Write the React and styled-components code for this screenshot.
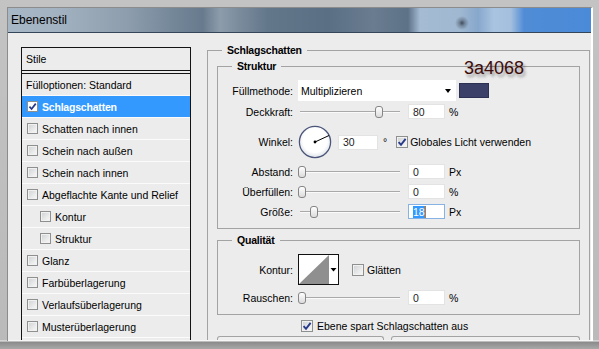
import React from 'react';
import styled, { createGlobalStyle } from 'styled-components';

const Global = createGlobalStyle`
  html, body { margin: 0; padding: 0; }
  body {
    width: 599px;
    height: 349px;
    overflow: hidden;
    background: linear-gradient(to bottom, #c3c3c3 0px, #bababa 340px, #f0f0f0 341px, #8a8a8a 342px, #a9a9a9 349px);
    font-family: "Liberation Sans", Arial, sans-serif;
    font-size: 10.5px;
    color: #000;
  }
`;

const Frame = styled.div`
  padding: 7px 0 0 7px;
`;

const Window = styled.div`
  width: 586px;
  height: 334px;
  box-sizing: border-box;
  border-top: 1px solid #8c8c8c;
  border-left: 1px solid #8c8c8c;
  border-right: 2px solid #ffffff;
  display: flex;
  flex-direction: column;
  background: #ececec;
`;

const TitleBar = styled.div`
  height: 25px;
  flex: none;
  box-sizing: border-box;
  border-bottom: 1px solid #34465a;
  display: flex;
  align-items: center;
  padding-left: 3px;
  font-size: 12px;
  color: #000;
  background:
    radial-gradient(circle at 454px 15px, rgba(40, 50, 62, 0.8) 0px, rgba(40, 50, 62, 0.35) 3px, rgba(40, 50, 62, 0) 7px),
    linear-gradient(to right,
      #a8b7c5 0px, #a3b2c0 50px, #8d9dad 120px, #748799 165px, #687b8e 195px,
      #8c9cab 212px, #7a8b9c 232px, #63778b 260px, #5b6f84 320px, #697c90 365px,
      #5e7287 400px, #a4bbd3 412px, #a0b8d1 452px, #87a7cc 470px, #a9c4e1 486px,
      #a3bfdd 503px, #508cd6 516px, #4a8ad8 586px);
`;

const Content = styled.div`
  flex: 1;
  display: flex;
  align-items: flex-start;
  padding: 14px 1px 0 13px;
  overflow: hidden;
  border-bottom: 1px solid #f7f7f7;
`;

const ListBox = styled.div`
  width: 170px;
  flex: none;
  align-self: stretch;
  box-sizing: border-box;
  border: 1px solid #141414;
  border-bottom: none;
`;

const ListHeader = styled.div`
  height: 22px;
  display: flex;
  align-items: center;
  padding-left: 4px;
  border-bottom: 1px solid #141414;
`;

const ListRows = styled.div`
  margin-top: 2px;
  border-top: 1px solid #141414;
`;

const ListRow = styled.div`
  height: 21px;
  display: flex;
  align-items: center;
  gap: 4px;
  padding-left: ${p => p.$indent}px;
  border-bottom: 1px solid #fbfbfb;
  background: ${p => (p.$selected ? '#3399ff' : 'transparent')};
  color: ${p => (p.$selected ? '#ffffff' : '#000000')};
  font-weight: ${p => (p.$selected ? 'bold' : 'normal')};
  letter-spacing: ${p => (p.$selected ? '-0.2px' : '0')};
  white-space: nowrap;
`;

const Box = styled.span`
  width: ${p => p.$size}px;
  height: ${p => p.$size}px;
  flex: none;
  box-sizing: border-box;
  border: 1px solid #8e8f8f;
  background: ${p => (p.$white ? '#ffffff' : 'linear-gradient(135deg, #cdd0d3 0%, #eeeeee 70%, #f8f8f8 100%)')};
  box-shadow: inset 0 0 0 1px ${p => (p.$white ? '#ffffff' : '#f1f1f1')};
  display: flex;
  align-items: center;
  justify-content: center;
`;

const Check = ({ checked, size = 11, white }) => (
  <Box $size={size} $white={white}>
    {checked && (
      <svg width={size - 2} height={size - 2} viewBox="0 0 10 10">
        <path d="M1.6 5.1 L4 7.8 L8.6 1.8" fill="none" stroke="#27398a" strokeWidth="1.9" />
      </svg>
    )}
  </Box>
);

const RightCol = styled.div`
  width: 383px;
  flex: none;
  margin-left: 16px;
  padding-top: 3px;
`;

const OuterGroup = styled.div`
  position: relative;
  border: 1px solid #a3a3a3;
  border-bottom: none;
  padding: 15px 9px 0 9px;
`;

const Legend = styled.span`
  position: absolute;
  top: -7px;
  left: 14px;
  padding: 0 5px;
  line-height: 12px;
  background: #ececec;
  font-weight: bold;
  letter-spacing: -0.2px;
`;

const Group = styled.div`
  position: relative;
  border: 1px solid #a3a3a3;
  margin-top: ${p => p.$mt}px;
  padding: 13px 0 9px 0;
`;

const Row = styled.div`
  display: flex;
  align-items: center;
  height: ${p => p.$h}px;
  margin-top: ${p => p.$mt || 0}px;
  white-space: nowrap;
`;

const Label = styled.span`
  width: 75px;
  flex: none;
  text-align: right;
  margin-right: 5px;
`;

const Select = styled.div`
  width: 158px;
  height: 21px;
  flex: none;
  box-sizing: border-box;
  background: #ffffff;
  display: flex;
  align-items: center;
  padding-left: 3px;
`;

const Arrow = styled.span`
  margin-left: auto;
  margin-right: 5px;
  width: 0;
  height: 0;
  border-left: 3.5px solid transparent;
  border-right: 3.5px solid transparent;
  border-top: 4px solid #000;
`;

const Swatch = styled.span`
  width: 30px;
  height: 15px;
  flex: none;
  box-sizing: border-box;
  margin-left: 3px;
  background: #3a4068;
  border: 1px solid #2c3154;
`;

const Slider = styled.div`
  position: relative;
  width: 102px;
  height: 14px;
  flex: none;
  &::before {
    content: '';
    position: absolute;
    left: 2px;
    right: 0;
    top: 6px;
    height: 1px;
    background: #a9a9a9;
    box-shadow: 0 1px 0 #fafafa;
  }
`;

const Thumb = styled.span`
  position: absolute;
  top: 1px;
  left: ${p => p.$pos}px;
  width: 8px;
  height: 12px;
  box-sizing: border-box;
  border: 1px solid #858585;
  border-radius: 3px;
  background: linear-gradient(to bottom, #ffffff, #dcdcdc);
`;

const NumInput = styled.div`
  width: ${p => p.$w || 37}px;
  height: 15px;
  flex: none;
  box-sizing: border-box;
  margin-left: ${p => p.$ml ?? 8}px;
  background: #ffffff;
  border: 1px solid ${p => (p.$focus ? '#86b3e3' : '#e3e3e3')};
  display: flex;
  align-items: center;
  padding-left: 4px;
  color: #1c1c1c;
`;

const Selection = styled.span`
  background: #3399ff;
  color: #ffffff;
  line-height: 12px;
`;

const Caret = styled.span`
  width: 1px;
  height: 12px;
  background: #e07000;
`;

const Unit = styled.span`
  margin-left: ${p => p.$ml ?? 4}px;
`;

const CheckLabel = styled.span`
  display: flex;
  align-items: center;
  gap: ${p => p.$gap ?? 2}px;
  margin-left: ${p => p.$ml || 0}px;
`;

const Picker = styled.span`
  width: 41px;
  height: 31px;
  flex: none;
  box-sizing: border-box;
  border: 1px solid #111;
  background: #ffffff;
  display: flex;
`;

const Annotation = styled.span`
  position: absolute;
  left: 256px;
  top: 8px;
  z-index: 2;
  font-size: 18px;
  line-height: 18px;
  color: #3e0b0b;
  text-shadow: 2px 3px 3px rgba(0, 0, 0, 0.35);
`;

const FooterCheck = styled.div`
  display: flex;
  align-items: center;
  gap: 4px;
  height: 12px;
  margin-top: 5px;
  padding-left: 84px;
  white-space: nowrap;
`;

const Tabs = styled.div`
  display: flex;
  gap: 7px;
  margin-top: 4px;
`;

const Tab = styled.div`
  width: ${p => p.$w}px;
  height: 24px;
  box-sizing: border-box;
  border: 1px solid #a3a3a3;
  border-bottom: none;
  border-radius: 3px 3px 0 0;
  background: #efefef;
`;

const styles = [
  { label: 'Fülloptionen: Standard', plain: true },
  { label: 'Schlagschatten', checked: true, selected: true },
  { label: 'Schatten nach innen' },
  { label: 'Schein nach außen' },
  { label: 'Schein nach innen' },
  { label: 'Abgeflachte Kante und Relief' },
  { label: 'Kontur', indent: true },
  { label: 'Struktur', indent: true },
  { label: 'Glanz' },
  { label: 'Farbüberlagerung' },
  { label: 'Verlaufsüberlagerung' },
  { label: 'Musterüberlagerung' },
];

const Dial = () => (
  <svg width="34" height="34" viewBox="0 0 34 34" style={{ flex: 'none' }}>
    <defs>
      <radialGradient id="dialFill" cx="50%" cy="45%" r="55%">
        <stop offset="70%" stopColor="#ffffff" />
        <stop offset="100%" stopColor="#dde1e8" />
      </radialGradient>
    </defs>
    <circle cx="17" cy="17" r="15.6" fill="url(#dialFill)" stroke="#4a5579" strokeWidth="1.3" />
    <line x1="17" y1="17" x2="31" y2="10.5" stroke="#000" strokeWidth="1" />
    <circle cx="17" cy="17" r="1.4" fill="#000" />
  </svg>
);

const ContourPreview = () => (
  <svg width="39" height="29" viewBox="0 0 39 29">
    <polygon points="0,29 30,0 30,29" fill="#8f8f8f" />
    <polygon points="31.5,13 37.5,13 34.5,16.5" fill="#000" />
  </svg>
);

export default function App() {
  return (
    <>
      <Global />
      <Frame>
        <Window>
          <TitleBar>Ebenenstil</TitleBar>
          <Content>
            <ListBox>
              <ListHeader>Stile</ListHeader>
              <ListRows>
                {styles.map(s => (
                  <ListRow key={s.label} $selected={s.selected} $indent={s.plain ? 4 : s.indent ? 18 : 5}>
                    {!s.plain && <Check checked={s.checked} white={s.selected} />}
                    <span>{s.label}</span>
                  </ListRow>
                ))}
              </ListRows>
            </ListBox>

            <RightCol>
              <OuterGroup>
                <Legend>Schlagschatten</Legend>
                <Annotation>3a4068</Annotation>

                <Group $mt={0}>
                  <Legend>Struktur</Legend>
                  <Row $h={21}>
                    <Label>Füllmethode:</Label>
                    <Select>
                      Multiplizieren
                      <Arrow />
                    </Select>
                    <Swatch />
                  </Row>
                  <Row $h={15} $mt={3}>
                    <Label>Deckkraft:</Label>
                    <Slider><Thumb $pos={77} /></Slider>
                    <NumInput>80</NumInput>
                    <Unit>%</Unit>
                  </Row>
                  <Row $h={34} $mt={6}>
                    <Label>Winkel:</Label>
                    <Dial />
                    <NumInput $ml={6} $w={40}>30</NumInput>
                    <Unit $ml={5}>°</Unit>
                    <CheckLabel $ml={9}>
                      <Check checked size={12} />
                      Globales Licht verwenden
                    </CheckLabel>
                  </Row>
                  <Row $h={15} $mt={5}>
                    <Label>Abstand:</Label>
                    <Slider><Thumb $pos={0} /></Slider>
                    <NumInput>0</NumInput>
                    <Unit>Px</Unit>
                  </Row>
                  <Row $h={15} $mt={5}>
                    <Label>Überfüllen:</Label>
                    <Slider><Thumb $pos={0} /></Slider>
                    <NumInput>0</NumInput>
                    <Unit>%</Unit>
                  </Row>
                  <Row $h={15} $mt={5}>
                    <Label>Größe:</Label>
                    <Slider><Thumb $pos={12} /></Slider>
                    <NumInput $focus>
                      <Selection>18</Selection>
                      <Caret />
                    </NumInput>
                    <Unit>Px</Unit>
                  </Row>
                </Group>

                <Group $mt={11}>
                  <Legend>Qualität</Legend>
                  <Row $h={31}>
                    <Label>Kontur:</Label>
                    <Picker><ContourPreview /></Picker>
                    <CheckLabel $ml={13} $gap={3}>
                      <Check size={12} />
                      Glätten
                    </CheckLabel>
                  </Row>
                  <Row $h={15} $mt={5}>
                    <Label>Rauschen:</Label>
                    <Slider><Thumb $pos={0} /></Slider>
                    <NumInput>0</NumInput>
                    <Unit>%</Unit>
                  </Row>
                </Group>

                <FooterCheck>
                  <Check checked size={12} />
                  Ebene spart Schlagschatten aus
                </FooterCheck>

                <Tabs>
                  <Tab $w={168} />
                  <Tab $w={191} />
                </Tabs>
              </OuterGroup>
            </RightCol>
          </Content>
        </Window>
      </Frame>
    </>
  );
}
